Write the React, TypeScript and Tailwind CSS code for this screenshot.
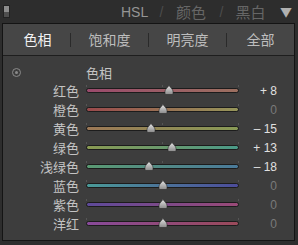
import React from "react";

const rows = [
  { label: "红色", value: 8, from: "#9a4a6c", to: "#9c7060" },
  { label: "橙色", value: 0, from: "#9a4a4c", to: "#96965a" },
  { label: "黄色", value: -15, from: "#9c7856", to: "#889a56" },
  { label: "绿色", value: 13, from: "#8a9a52", to: "#4a9a88" },
  { label: "浅绿色", value: -18, from: "#5a9a72", to: "#4a7a9a" },
  { label: "蓝色", value: 0, from: "#4a9a98", to: "#4c4c9a" },
  { label: "紫色", value: 0, from: "#5e4a9a", to: "#9a4a78" },
  { label: "洋红", value: 0, from: "#884a9a", to: "#9a4a5a" },
];

function fmt(v: number) {
  if (v > 0) return "+ " + v;
  if (v < 0) return "– " + Math.abs(v);
  return "0";
}

function Thumb() {
  return (
    <svg width="10" height="10" viewBox="0 0 10 10">
      <defs>
        <linearGradient id="tg" x1="0" y1="0" x2="0" y2="1">
          <stop offset="0" stopColor="#e4e4e4" />
          <stop offset="1" stopColor="#8a8a8a" />
        </linearGradient>
      </defs>
      <path d="M5 0.5 C6 2 8.5 4 9 6 L9 8.5 Q9 9.5 8 9.5 L2 9.5 Q1 9.5 1 8.5 L1 6 C1.5 4 4 2 5 0.5 Z" fill="url(#tg)" stroke="#2a2a2a" strokeWidth="0.6" />
    </svg>
  );
}

export default function App() {
  const font = { fontFamily: '"Noto Sans CJK SC", "Noto Sans", sans-serif' };
  return (
    <div className="w-[298px] h-[245px] bg-[#2d2d2d] flex flex-col overflow-hidden" style={font}>
      <div className="h-[23px] flex items-center whitespace-nowrap leading-none">
        <div className="ml-[3px] w-[7px] h-[13px] flex flex-col border border-[#222]">
          <div className="h-[6px] bg-[#8c8c8c]" />
          <div className="flex-1 bg-[#4e4e4e]" />
        </div>
        <div className="ml-[111px] w-[25px] text-center text-[14px] text-[#959595]" style={{ fontFamily: '"Liberation Sans", sans-serif' }}>HSL</div>
        <div className="ml-[13px] w-[5px] text-center text-[14px] text-[#4c4c4c]" style={{ fontFamily: '"Liberation Sans", sans-serif' }}>/</div>
        <div className="ml-[12px] w-[30px] text-center text-[15px] text-[#666]">颜色</div>
        <div className="ml-[13px] w-[5px] text-center text-[14px] text-[#4c4c4c]" style={{ fontFamily: '"Liberation Sans", sans-serif' }}>/</div>
        <div className="ml-[11px] w-[31px] text-center text-[15px] text-[#666]">黑白</div>
        <div className="ml-[14px] w-[10px] text-center text-[12px] text-[#b0b0b0]">▼</div>
      </div>
      <div className="ml-[2px] w-[293px] h-[218px] border border-[#141414] flex flex-col">
        <div className="h-[32px] bg-[#464646] border-b border-[#1e1e1e] flex items-center text-[14px]">
          <div className="w-[67px] text-center text-[#f2f2f2] pl-[2px]">色相</div>
          <div className="w-px h-[14px] bg-[#2a2a2a]" />
          <div className="w-[77px] text-center text-[#bdbdbd]">饱和度</div>
          <div className="w-px h-[14px] bg-[#2a2a2a]" />
          <div className="w-[77px] text-center text-[#bdbdbd]">明亮度</div>
          <div className="w-px h-[14px] bg-[#2a2a2a]" />
          <div className="flex-1 text-center text-[#bdbdbd]">全部</div>
        </div>
        <div className="flex-1 bg-[#3d3d3d] pt-[8px]">
          <div className="h-[17px] flex items-center">
            <div className="ml-[9px] w-[9px] h-[9px] rounded-full border border-[#8a8a8a] flex items-center justify-center">
              <div className="w-[3px] h-[3px] rounded-full bg-[#8a8a8a]" />
            </div>
            <div className="ml-[65px] text-[13px] text-[#c4c4c4]">色相</div>
          </div>
          {rows.map((r) => {
            const pos = 50 + r.value / 2;
            return (
              <div key={r.label} className="h-[19px] flex items-center">
                <div className="w-[76px] text-right text-[13px] text-[#c4c4c4] leading-none">{r.label}</div>
                <div className="ml-[7px] w-[153px] relative h-[19px] flex items-center">
                  <div className="absolute left-0 top-[4px] w-px h-[2px] bg-[#555]" />
                  <div className="absolute left-[76px] top-[4px] w-px h-[2px] bg-[#555]" />
                  <div className="absolute right-0 top-[4px] w-px h-[2px] bg-[#555]" />
                  <div
                    className="w-full h-[5px] rounded-full border border-[#1c1c1c]"
                    style={{ background: `linear-gradient(to right, ${r.from}, ${r.to})` }}
                  />
                  <div className="absolute top-[4px] -ml-[5px]" style={{ left: `${pos}%` }}>
                    <Thumb />
                  </div>
                </div>
                <div
                  className={`w-[38px] text-right text-[12px] ${r.value === 0 ? "text-[#7a7a7a]" : "text-[#e0e0e0]"}`}
                  style={{ fontFamily: '"Liberation Sans", sans-serif' }}
                >
                  {fmt(r.value)}
                </div>
              </div>
            );
          })}
        </div>
      </div>
    </div>
  );
}
